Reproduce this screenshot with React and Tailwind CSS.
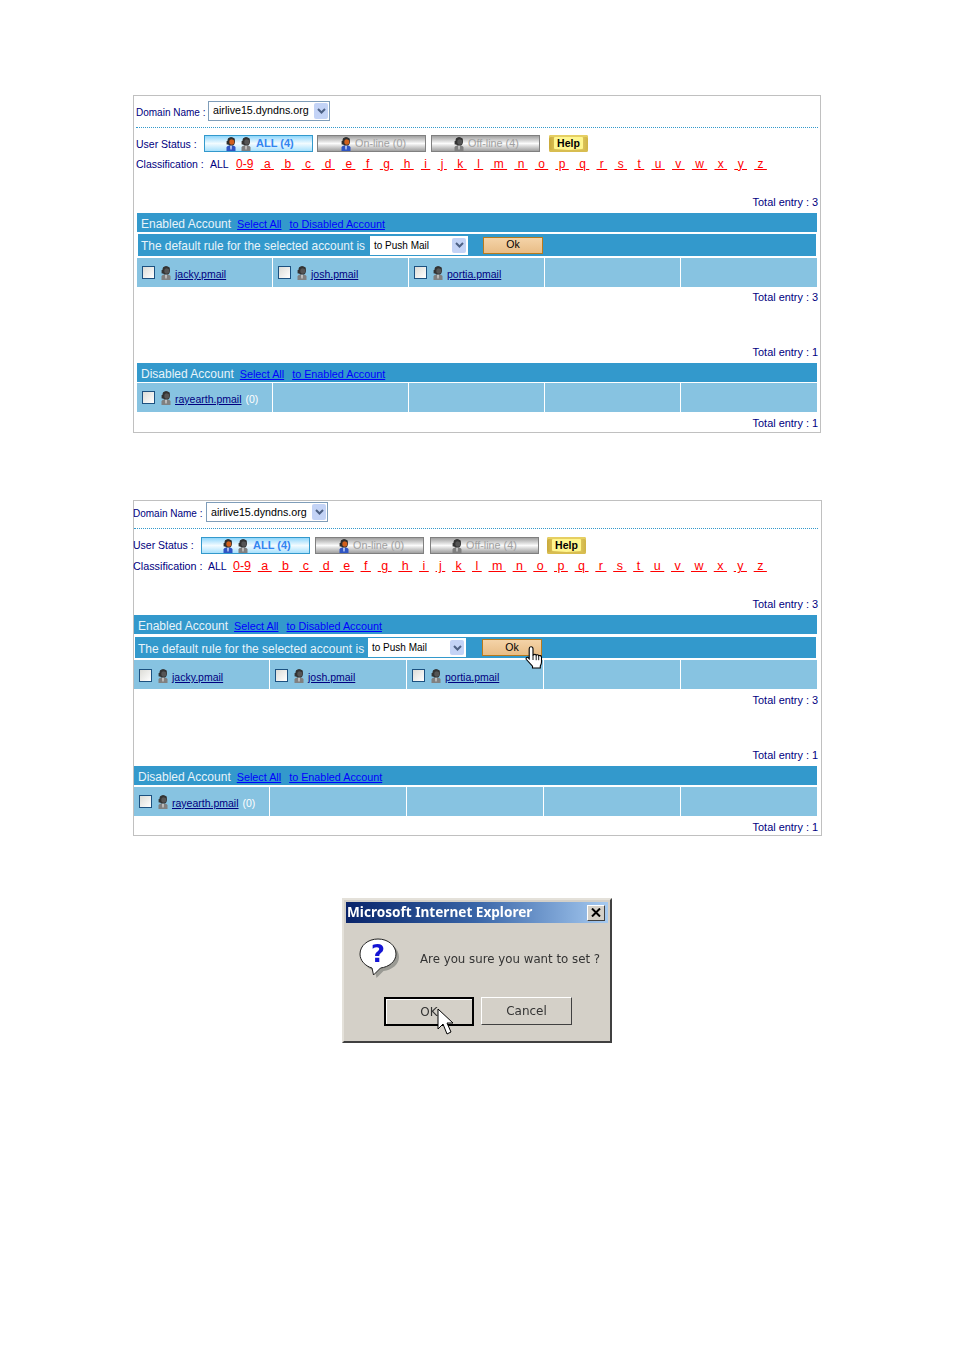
const LETTERS = ["0-9","a","b","c","d","e","f","g","h","i","j","k","l","m","n","o","p","q","r","s","t","u","v","w","x","y","z"];

function UserIcon({ color }) {
  const c = color
    ? { face: "#d2601c", hair: "#2e2e2e", body: "#2f55c4", tie: "#dfe8ff" }
    : { face: "#555555", hair: "#333333", body: "#808080", tie: "#d8d8d8" };
  return (
    <svg width="10" height="14" viewBox="0 0 10 14" className="shrink-0">
      <path d="M.5 14V10.500C.5 9 2 8.400 5 8.400S9.500 9 9.500 10.500V14Z" fill={c.body} />
      <path d="M4.200 8.500h1.600L5.500 12.500h-1Z" fill={c.tie} />
      <ellipse cx="5.200" cy="4.400" rx="3.800" ry="4.200" fill={c.hair} />
      <ellipse cx="5.800" cy="5" rx="2.500" ry="2.700" fill={c.face} />
      <path d="M2.500 3.500C3.500 1.800 6.500 1.600 8 3.200L8.800 1.800 5 .3 1.800 1.800Z" fill={c.hair} />
      <rect x=".6" y="4" width="2" height="3.600" rx=".6" fill={c.hair} />
    </svg>
  );
}

function Chevron() {
  return (
    <svg width="9" height="6" viewBox="0 0 9 6">
      <path d="M1 1l3.500 3.500L8 1" fill="none" stroke="#4d6185" strokeWidth="2" />
    </svg>
  );
}

function DomainSelect() {
  return (
    <div className="flex h-[20px] w-[122px] items-center justify-between border border-[#7f9db9] bg-white pl-[4px] pr-px">
      <span className="text-[10.700px] text-black">airlive15.dyndns.org</span>
      <span className="flex h-[16px] w-[14px] items-center justify-center rounded-[2px] bg-[#c3d3f6]"><Chevron /></span>
    </div>
  );
}

function RuleSelect() {
  return (
    <div className="flex h-[19px] w-[98px] items-center justify-between border border-white bg-white pl-[3px] pr-px">
      <span className="text-[10px] text-black">to Push Mail</span>
      <span className="flex h-[15px] w-[14px] items-center justify-center rounded-[2px] bg-[#c3d3f6]"><Chevron /></span>
    </div>
  );
}

function ActiveStatusButton({ label }) {
  return (
    <div className="flex h-[17px] w-[109px] items-center gap-[5px] border border-[#3399cc] bg-linear-to-b from-[#8ed6fb] via-[#f2fbff] to-[#a8e1fc] pl-[21px]">
      <UserIcon color />
      <UserIcon />
      <span className="text-[11px] font-bold text-[#3385f0]">{label}</span>
    </div>
  );
}

function StatusButton({ label, two, pad }) {
  return (
    <div className={`flex h-[17px] w-[109px] items-center gap-[4px] border border-[#808080] bg-linear-to-b from-[#a0a0a0] via-[#fbfbfb] to-[#a0a0a0] ${pad}`}>
      <UserIcon color={two} />
      <span className="text-[10.800px] text-[#a0a0a0]">{label}</span>
    </div>
  );
}

function HelpButton() {
  return (
    <div className="flex h-[17px] w-[39px] items-center justify-center rounded-[2px] bg-linear-to-r from-[#c9a93a] via-[#fff48c] to-[#cfb345] pb-px shadow-[inset_0_2px_0_#e6cf62,inset_0_-2px_0_#d8bd50]">
      <span className="rounded-[1px] bg-[#fff68f] px-[3px] text-[10.500px] font-bold leading-[12px] text-black">Help</span>
    </div>
  );
}

function Letters({ widthClass, sizeClass }) {
  return (
    <div className={`flex justify-between ${widthClass}`}>
      {LETTERS.map((l, i) => (
        <a key={l} className={`whitespace-pre text-[#ff0000] underline ${sizeClass}`}>
          {i === 0 ? l : `\u00a0${l}\u00a0`}
        </a>
      ))}
    </div>
  );
}

function TotalEntry({ n, className }) {
  return (
    <div className={`flex h-[14px] items-center justify-end text-[10.900px] leading-none text-[#000080] ${className}`}>
      Total entry : {n}
    </div>
  );
}

function HeaderBar({ title, other }) {
  return (
    <div className="flex h-[19px] items-center bg-[#3399cc] pl-[4px]">
      <span className="mt-[2px] text-[12px] text-[#e8f4fa]">{title}</span>
      <a className="ml-[6px] mt-[3px] text-[10.800px] text-[#0000ff] underline">Select All</a>
      <a className="ml-[8px] mt-[3px] text-[10.800px] text-[#0000ff] underline">{other}</a>
    </div>
  );
}

function RuleBar({ heightClass, labelClass, okClass, hand }) {
  return (
    <div className={`flex items-center bg-[#3399cc] pl-[3px] ${heightClass}`}>
      <span className={`mt-[3px] whitespace-nowrap text-[#e8f4fa] ${labelClass}`}>The default rule for the selected account is</span>
      <RuleSelect />
      <div className={`relative flex h-[17px] w-[60px] items-center justify-center border border-[#b87a1c] bg-linear-to-b from-[#f4d3a8] to-[#e8bd86] ${okClass}`}>
        <span className="text-[10.500px] text-black">Ok</span>
        {hand && <HandCursor />}
      </div>
    </div>
  );
}

function HandCursor() {
  return (
    <svg width="18" height="23" viewBox="0 0 18 23" className="absolute left-[42px] top-[6px]">
      <path d="M6 .7c1.200 0 2 .8 2 2V9h.7c.3-1 2.300-1 2.500.2.600-.8 2.300-.7 2.500.5.800-.5 2.800-.2 2.800 1.500v4.800c0 1.800-.5 2.800-1.200 4V22H7.500v-1.800L1.400 13.500c-1-1.300.8-3 2-1.700L4.200 12.700V2.700c0-1.200.6-2 1.800-2z" fill="#fff" stroke="#000" strokeWidth="1.100" />
      <path d="M8 9v5M11.200 9.200v5M13.700 9.700v4.500" stroke="#000" strokeWidth=".9" fill="none" />
    </svg>
  );
}

function Checkbox() {
  return <span className="block size-[13px] shrink-0 border border-[#1c5180] bg-linear-to-br from-[#dcdcd7] to-white" />;
}

function Cell({ name, count, cellClass }) {
  return (
    <div className={`flex h-[29px] items-start bg-[#87c3e1] pl-[5px] ${cellClass}`}>
      {name && (
        <>
          <span className="mt-[8px]"><Checkbox /></span>
          <span className="ml-[6px] mt-[8px]"><UserIcon /></span>
          <a className="ml-[4px] mt-[9px] text-[10.500px] leading-[14px] text-[#000080] underline">{name}</a>
          {count && <span className="ml-[4px] mt-[9px] text-[10.500px] leading-[14px] text-white">{count}</span>}
        </>
      )}
    </div>
  );
}

function Cells({ names, className, cellClass = "" }) {
  return (
    <div className={`grid gap-px ${className}`}>
      {[0, 1, 2, 3, 4].map((i) => (
        <Cell key={i} name={names[i]} cellClass={cellClass} count={names[i] === "rayearth.pmail" ? "(0)" : null} />
      ))}
    </div>
  );
}

function FirstPanel() {
  return (
    <section className="ml-[133px] h-[338px] w-[688px] border border-[#c0c0c0] bg-white">
      <div className="mx-[2px] flex h-[32px] items-center border-b border-dotted border-[#3399cc] pb-[2px] text-[#000080]">
        <span className="mt-[4px] w-[72px] text-[10px]">Domain Name :</span>
        <DomainSelect />
      </div>
      <div className="ml-[2px] mt-[7px] flex h-[17px] items-center text-[#000080]">
        <span className="mt-[2px] w-[68px] text-[10.500px]">User Status :</span>
        <ActiveStatusButton label="ALL (4)" />
        <span className="ml-[4px]"><StatusButton label="On-line (0)" two pad="pl-[23px]" /></span>
        <span className="ml-[5px]"><StatusButton label="Off-line (4)" pad="pl-[22px]" /></span>
        <span className="ml-[9px]"><HelpButton /></span>
      </div>
      <div className="ml-[2px] mt-[4px] flex h-[15px] items-center text-[#000080]">
        <span className="mt-[2px] w-[74px] text-[10.500px]">Classification :</span>
        <span className="mt-[2px] w-[26px] text-[10.500px]">ALL</span>
        <Letters widthClass="w-[531px]" sizeClass="text-[12px]" />
      </div>
      <TotalEntry n={3} className="mt-[24px] pr-[2px]" />
      <div className="mx-[3px] mt-[4px]">
        <HeaderBar title="Enabled Account" other="to Disabled Account" />
      </div>
      <div className="mx-[4px] mt-[2px]">
        <RuleBar heightClass="h-[22px]" labelClass="w-[229px] text-[11.900px]" okClass="ml-[15px]" />
      </div>
      <Cells names={["jacky.pmail", "josh.pmail", "portia.pmail"]} className="mx-[3px] mt-[2px] grid-cols-[135px_135px_135px_135px_136px]" />
      <TotalEntry n={3} className="mt-[3px] pr-[2px]" />
      <TotalEntry n={1} className="mt-[41px] pr-[2px]" />
      <div className="mx-[3px] mt-[4px]">
        <HeaderBar title="Disabled Account" other="to Enabled Account" />
      </div>
      <Cells names={["rayearth.pmail"]} className="mx-[3px] mt-px grid-cols-[135px_135px_135px_135px_136px]" />
      <TotalEntry n={1} className="mt-[4px] pr-[2px]" />
    </section>
  );
}

function SecondPanel() {
  return (
    <section className="ml-[133px] mt-[67px] h-[336px] w-[689px] border border-[#c0c0c0] bg-white">
      <div className="mr-[3px] flex h-[28px] items-start border-b border-dotted border-[#3399cc] text-[#000080]">
        <span className="-ml-px mt-[5px] w-[73px] text-[10px]">Domain Name :</span>
        <div className="mt-px"><DomainSelect /></div>
      </div>
      <div className="mt-[8px] flex h-[17px] items-center text-[#000080]">
        <span className="-ml-px mt-px w-[68px] text-[10.500px]">User Status :</span>
        <ActiveStatusButton label="ALL (4)" />
        <span className="ml-[5px]"><StatusButton label="On-line (0)" two pad="pl-[23px]" /></span>
        <span className="ml-[6px]"><StatusButton label="Off-line (4)" pad="pl-[21px]" /></span>
        <span className="ml-[8px]"><HelpButton /></span>
      </div>
      <div className="mt-[5px] flex h-[15px] items-center text-[#000080]">
        <span className="-ml-px w-[75px] text-[10.800px]">Classification :</span>
        <span className="w-[25px] text-[10.500px]">ALL</span>
        <Letters widthClass="w-[534px]" sizeClass="text-[12.500px]" />
      </div>
      <TotalEntry n={3} className="mt-[23px] pr-[3px]" />
      <div className="mr-[4px] mt-[4px]">
        <HeaderBar title="Enabled Account" other="to Disabled Account" />
      </div>
      <div className="ml-px mr-[5px] mt-[3px]">
        <RuleBar heightClass="h-[21px]" labelClass="w-[230px] text-[12px]" okClass="ml-[16px]" hand />
      </div>
      <Cells names={["jacky.pmail", "josh.pmail", "portia.pmail"]} cellClass="pt-px" className="mr-[4px] mt-[2px] grid-cols-[135px_136px_136px_136px_136px]" />
      <TotalEntry n={3} className="mt-[4px] pr-[3px]" />
      <TotalEntry n={1} className="mt-[41px] pr-[3px]" />
      <div className="mr-[4px] mt-[4px]">
        <HeaderBar title="Disabled Account" other="to Enabled Account" />
      </div>
      <Cells names={["rayearth.pmail"]} className="mr-[4px] mt-[2px] grid-cols-[135px_136px_136px_136px_136px]" />
      <TotalEntry n={1} className="mt-[4px] pr-[3px]" />
    </section>
  );
}

function QuestionIcon() {
  return (
    <svg width="42" height="42" viewBox="0 0 42 42" className="shrink-0">
      <path d="M21 3C11 3 3 9.500 3 18c0 6.500 5 12 12 14l1.500 7 7-7C32 31 39 25.500 39 18 39 9.500 31 3 21 3z" fill="#9a9a94" transform="translate(2 2)" />
      <path d="M20 2C10 2 2 8.500 2 17c0 6.500 5 12 12 14l1.500 7 7-7C31 30 38 24.500 38 17 38 8.500 30 2 20 2z" fill="#fff" stroke="#222" strokeWidth="1" />
      <text x="20" y="25" textAnchor="middle" fontFamily="'DejaVu Sans', sans-serif" fontSize="24" fontWeight="700" fill="#1414d4">?</text>
    </svg>
  );
}

function ArrowCursor() {
  return (
    <svg width="17" height="27" viewBox="0 0 17 27" className="absolute left-[51px] top-[9px]">
      <path d="M1 1v20l5-5 4 10 4-2-4-9h6Z" fill="#fff" stroke="#000" strokeWidth="1" />
    </svg>
  );
}

function Dialog() {
  return (
    <section className="ml-[342px] mt-[62px] h-[145px] w-[270px] border-2 border-[#e4e1da] border-b-[#404040] border-r-[#404040] bg-[#d4d0c8] p-[2px] font-['DejaVu_Sans',sans-serif] blur-[0.4px]">
      <div className="flex h-[21px] items-center justify-between bg-linear-to-r from-[#0a246a] via-[#3a66a8] to-[#a6caf0] pl-px pr-[3px]">
        <span className="font-['Noto_Sans',sans-serif] text-[13.600px] font-bold whitespace-nowrap text-white">Microsoft Internet Explorer</span>
        <span className="flex h-[16px] w-[18px] items-center justify-center border border-b-[#404040] border-l-white border-r-[#404040] border-t-white bg-[#d4d0c8]">
          <svg width="10" height="9" viewBox="0 0 10 9"><path d="M1 .5l8 8M9 .5l-8 8" stroke="#000" strokeWidth="2" /></svg>
        </span>
      </div>
      <div className="ml-[12px] mt-[14px] flex items-start">
        <QuestionIcon />
        <span className="ml-[20px] mt-[14px] text-[11.800px] whitespace-nowrap text-[#333]">Are you sure you want to set ?</span>
      </div>
      <div className="ml-[38px] mt-[18px] flex items-start gap-[7px]">
        <div className="relative flex h-[29px] w-[90px] items-center justify-center border-2 border-black bg-[#d4d0c8] shadow-[inset_1px_1px_0_#fff]">
          <span className="text-[12px] text-[#333]">OK</span>
          <ArrowCursor />
        </div>
        <div className="flex h-[28px] w-[91px] items-center justify-center border border-b-[#404040] border-l-white border-r-[#404040] border-t-white bg-[#d4d0c8]">
          <span className="text-[12px] text-[#333]">Cancel</span>
        </div>
      </div>
    </section>
  );
}

export default function App() {
  return (
    <div className="h-[1350px] w-[954px] overflow-hidden bg-white pt-[95px] font-['Liberation_Sans',Arial,sans-serif]">
      <FirstPanel />
      <SecondPanel />
      <Dialog />
    </div>
  );
}
